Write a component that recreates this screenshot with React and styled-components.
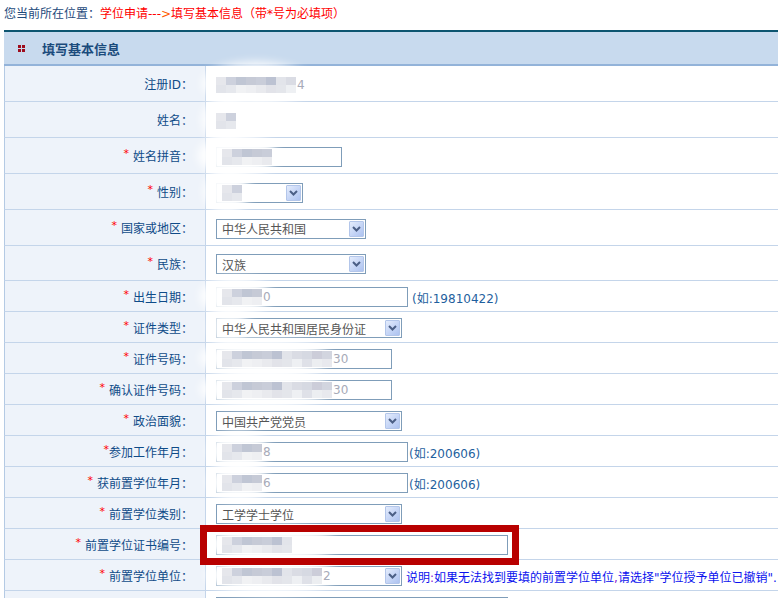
import styled, { createGlobalStyle } from 'styled-components';

const GlobalStyle = createGlobalStyle`
  html, body {
    margin: 0;
    background: #fff;
    overflow: hidden;
  }
  body {
    font-family: "DejaVu Sans", "Noto Sans CJK SC", sans-serif;
    font-size: 12px;
  }
`;

const SHADES = [
  ['#e6e7ec', '#c9cdd9', '#d6d9e2', '#cdd1dd', '#bcc2d2', '#cccdd9', '#c0c6d4', '#e2e4ea', '#d2d5df', '#c6cad6', '#dadce4'],
  ['#eef0f3', '#e2e4ea', '#e9eaee', '#dfe1e8', '#e6e8ed', '#e2e3e9', '#eceef1', '#f1f2f4', '#e4e6eb', '#e8e9ee', '#eeeff2'],
];

const rows = [
  { id: 'uid', label: '注册ID', h: 36, kind: 'plain', cols: 8, tail: '4', cloud: [-4, 108] },
  { id: 'name', label: '姓名', h: 36, kind: 'plain', cols: 2, tail: '', cloud: [-4, 46] },
  { id: 'pinyin', label: '姓名拼音', req: true, h: 36, kind: 'input', w: 126, cols: 5, cloud: [-8, 80] },
  { id: 'sex', label: '性别', req: true, h: 36, kind: 'select', w: 87, cols: 2, cloud: [-2, 46] },
  { id: 'country', label: '国家或地区', req: true, h: 36, kind: 'select', w: 150, text: '中华人民共和国' },
  { id: 'nation', label: '民族', req: true, h: 35, kind: 'select', w: 150, text: '汉族' },
  { id: 'birth', label: '出生日期', req: true, h: 31, kind: 'input', w: 192, cols: 4, tail: '0', cloud: [-6, 72], hint: '(如:19810422)', gap: 4 },
  { id: 'idtype', label: '证件类型', req: true, h: 31, kind: 'select', w: 186, text: '中华人民共和国居民身份证', cloud: [2, 40], faint: true },
  { id: 'idno', label: '证件号码', req: true, h: 31, kind: 'input', w: 176, cols: 11, tail: '30', cloud: [-6, 130] },
  { id: 'idno2', label: '确认证件号码', req: true, h: 31, kind: 'input', w: 176, cols: 11, tail: '30', cloud: [-6, 130] },
  { id: 'party', label: '政治面貌', req: true, h: 31, kind: 'select', w: 186, text: '中国共产党党员' },
  { id: 'work', label: '参加工作年月', req: true, tight: true, h: 31, kind: 'input', w: 192, cols: 4, tail: '8', cloud: [2, 62], hint: '(如:200606)', gap: 1 },
  { id: 'degdate', label: '获前置学位年月', req: true, h: 31, kind: 'input', w: 192, cols: 4, tail: '6', cloud: [2, 62], hint: '(如:200606)', gap: 1 },
  { id: 'degtype', label: '前置学位类别', req: true, h: 31, kind: 'select', w: 186, text: '工学学士学位' },
  { id: 'certno', label: '前置学位证书编号', req: true, h: 31, kind: 'input', w: 292, cols: 7, cloud: [0, 130], marked: true },
  { id: 'unit', label: '前置学位单位', req: true, h: 31, kind: 'select', w: 186, cols: 10, tail: '2', cloud: [0, 130], note: true },
  { id: 'major', label: '', h: 31, kind: 'input', w: 292 },
];

function Mosaic({ cols, rowsN = 2 }) {
  if (!cols) return null;
  return (
    <Blocks>
      {Array.from({ length: rowsN }).map((_, r) => (
        <BlockRow key={r}>
          {Array.from({ length: cols }).map((__, c) => (
            <Block key={c} $c={SHADES[r % 2][(c * 3 + r) % SHADES[0].length]} />
          ))}
        </BlockRow>
      ))}
    </Blocks>
  );
}

function Chevron() {
  return (
    <svg width="9" height="6" viewBox="0 0 9 6">
      <path d="M1 1 L4.5 4.5 L8 1" fill="none" stroke="#4b5f86" strokeWidth="2" />
    </svg>
  );
}

function Value({ row }) {
  const inner = (
    <>
      <Mosaic cols={row.cols} />
      {row.tail && <Tail>{row.tail}</Tail>}
      {row.text && <SelectText>{row.text}</SelectText>}
    </>
  );
  return (
    <ValueCell>
      {row.cloud && <Cloud $x={row.cloud[0]} $w={row.cloud[1]} $faint={row.faint} />}
      {row.kind === 'plain' && <Plain>{inner}</Plain>}
      {row.kind === 'input' && <Field $w={row.w}>{inner}</Field>}
      {row.kind === 'select' && (
        <Field $w={row.w}>
          {inner}
          <Arrow>
            <Chevron />
          </Arrow>
        </Field>
      )}
      {row.hint && <Hint $gap={row.gap}>{row.hint}</Hint>}
      {row.note && (
        <Note>
          说明<Punct>:</Punct>如果无法找到要填的前置学位单位<Punct>,</Punct>请选择"学位授予单位已撤销".
        </Note>
      )}
      {row.marked && <Marker />}
    </ValueCell>
  );
}

export default function App() {
  return (
    <>
      <GlobalStyle />
      <Crumb>
        您当前所在位置：<Red>学位申请---</Red><Orange>&gt;</Orange><Red>填写基本信息（带*号为必填项）</Red>
      </Crumb>
      <Table>
        <Header>
          <Dots>
            <i /><i /><i /><i />
          </Dots>
          <Title>填写基本信息</Title>
        </Header>
        {rows.map((row) => (
          <Row key={row.id} $h={row.h}>
            <Label>
              {row.req && <Star $tight={row.tight}>*</Star>}
              {row.label && `${row.label}：`}
            </Label>
            <Value row={row} />
          </Row>
        ))}
      </Table>
    </>
  );
}

const Crumb = styled.div`
  height: 24px;
  padding: 6px 0 0 4px;
  line-height: 16px;
  color: #1d4a7b;
  white-space: nowrap;
`;

const Red = styled.span`
  color: #ff0000;
`;

const Orange = styled.span`
  color: #ff5a00;
`;

const Table = styled.div`
  margin-left: 4px;
  width: 820px;
`;

const Header = styled.div`
  height: 32px;
  border-top: 2px solid #0d5570;
  border-bottom: 2px solid #93b3d9;
  background: #c8daee;
  display: flex;
  align-items: center;
  padding-left: 14px;
`;

const Dots = styled.span`
  display: grid;
  grid-template-columns: 3px 3px;
  gap: 1px;
  i {
    display: block;
    width: 3px;
    height: 3px;
    background: #9e0d1d;
  }
`;

const Title = styled.span`
  margin-left: 17px;
  font-weight: bold;
  font-size: 13px;
  color: #1b4b7c;
`;

const Row = styled.div`
  display: grid;
  grid-template-columns: 201px 1fr;
  height: ${(p) => p.$h}px;
  box-sizing: border-box;
  border-left: 1px solid #b4cae4;
  border-bottom: 1px solid #c4d5ea;
`;

const Label = styled.div`
  display: flex;
  align-items: center;
  justify-content: flex-end;
  padding-right: 12px;
  background: #eef3fa;
  border-right: 1px solid #c4d5ea;
  color: #0f4b88;
  white-space: nowrap;
`;

const Star = styled.span`
  color: #ff0000;
  font-size: 11px;
  margin-right: ${(p) => (p.$tight ? 0 : 4)}px;
  position: relative;
  top: -2px;
`;

const ValueCell = styled.div`
  position: relative;
  display: flex;
  align-items: center;
  padding: 2px 0 0 10px;
  white-space: nowrap;
  background: #fff;
`;

const Cloud = styled.div`
  position: absolute;
  left: ${(p) => p.$x}px;
  top: -4px;
  bottom: -4px;
  width: ${(p) => p.$w}px;
  border-radius: 50%;
  background: rgba(255, 255, 255, ${(p) => (p.$faint ? 0.75 : 0.95)});
  filter: blur(5px);
  z-index: 1;
  pointer-events: none;
`;

const Plain = styled.div`
  display: flex;
  align-items: center;
  height: 20px;
  position: relative;
  z-index: 2;
`;

const Field = styled.div`
  position: relative;
  display: flex;
  align-items: center;
  box-sizing: border-box;
  width: ${(p) => p.$w}px;
  height: 20px;
  padding-left: 5px;
  border: 1px solid #7f9db9;
  background: #fff;
  color: #555;
  & > * {
    position: relative;
    z-index: 2;
  }
`;

const Blocks = styled.span`
  display: inline-flex;
  flex-direction: column;
  filter: blur(0.6px);
`;

const BlockRow = styled.span`
  display: flex;
`;

const Block = styled.span`
  width: 10px;
  height: 8px;
  background: ${(p) => p.$c};
`;

const Tail = styled.span`
  color: #a7aab8;
  margin-left: 1px;
`;

const SelectText = styled.span`
  color: #555;
`;

const Arrow = styled.span`
  position: absolute !important;
  right: 1px;
  top: 1px;
  width: 15px;
  height: 16px;
  box-sizing: border-box;
  border: 1px solid #b3c6ea;
  border-radius: 1px;
  background: linear-gradient(135deg, #e4ecfc 0%, #c5d5f6 55%, #adc2f0 100%);
  display: flex;
  align-items: center;
  justify-content: center;
`;

const Hint = styled.span`
  margin-left: ${(p) => p.$gap}px;
  color: #1f5f9e;
`;

const Note = styled.span`
  margin-left: 4px;
  color: #0b12ee;
`;

const Punct = styled.span`
  color: #8a1ad0;
`;

const Marker = styled.div`
  position: absolute;
  left: -6px;
  top: -4px;
  width: 319px;
  height: 40px;
  box-sizing: border-box;
  border: 7px solid #b80000;
  z-index: 3;
`;
